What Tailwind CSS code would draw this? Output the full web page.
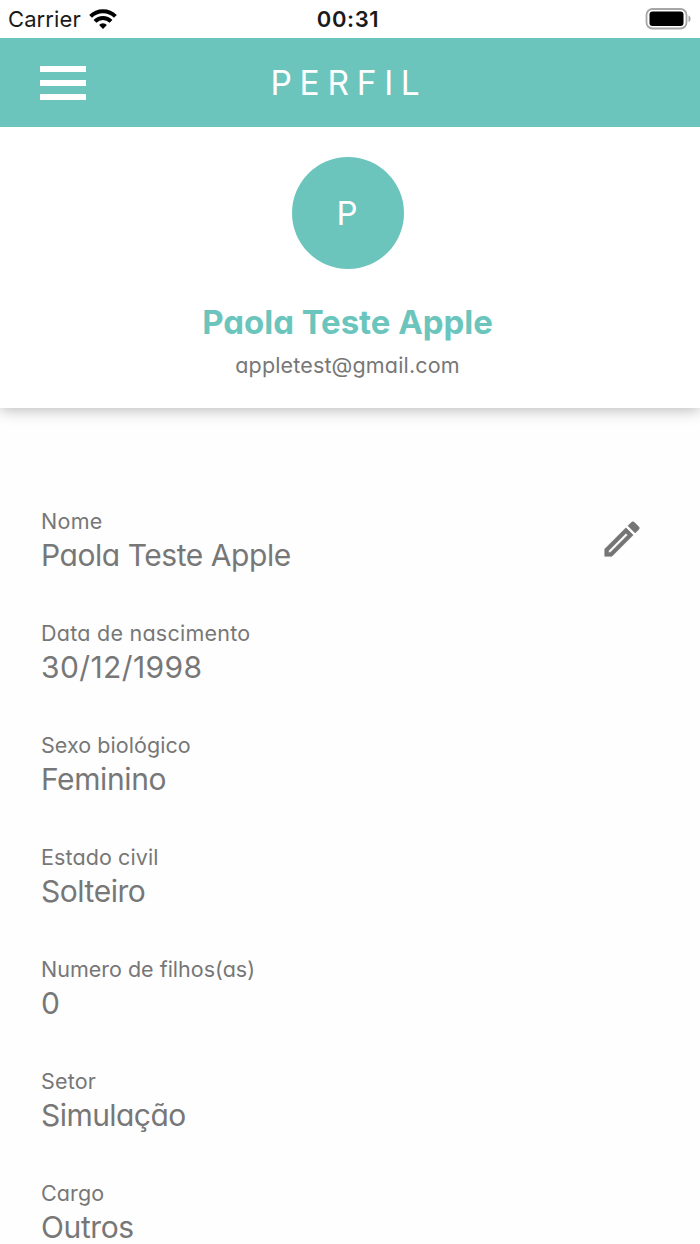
<!DOCTYPE html>
<html lang="pt-BR">

<head>
  <meta charset="UTF-8" />
  <meta name="viewport" content="width=device-width, initial-scale=1.0" />
  <title>Perfil</title>
  <script src="https://cdn.jsdelivr.net/npm/@tailwindcss/browser@4"></script>
</head>

<body class="h-[1244px] overflow-hidden bg-[#fefefe] text-[#777777] font-['Inter','Lato',sans-serif] [font-feature-settings:'cv11']">

  <!-- Status bar -->
  <div class="grid grid-cols-3 items-center h-[38px] pl-2 pr-[9px] bg-white text-[#1a1a1a]">
    <div class="flex items-center gap-2">
      <span class="text-[22px] leading-[38px] tracking-[0.1px] [font-feature-settings:normal]">Carrier</span>
      <svg class="w-7 h-5" viewBox="0 0 28 20" fill="none" stroke="#000" stroke-width="4">
        <path d="M1.600 7.400a17.600 17.600 0 0 1 24.800 0" />
        <path d="M6 12.400a11.400 11.400 0 0 1 16 0" />
        <path d="M14 20l-3.900-4.100a5.600 5.600 0 0 1 7.800 0z" fill="#000" stroke="none" />
      </svg>
    </div>
    <span class="pr-[3px] text-center text-[22px] leading-[38px] font-semibold tracking-[0.6px] [font-feature-settings:normal]">00:31</span>
    <svg class="justify-self-end w-[46px] h-[22px]" viewBox="0 0 46 22">
      <rect x="1.500" y="1" width="40" height="19.500" rx="6" fill="#fff" stroke="#a6a6a6" stroke-width="1.800" />
      <rect x="4.500" y="3.500" width="34" height="14.500" rx="3" fill="#000" />
      <path d="M43.500 7.500c2.800 1 2.800 5.500 0 6.500z" fill="#a6a6a6" />
    </svg>
  </div>

  <!-- Header -->
  <header class="relative z-10 grid grid-cols-[1fr_auto_1fr] items-center h-[89px] pl-10 pr-[42px] bg-[#6bc5bc] text-white">
    <button class="flex flex-col gap-2 w-[46px]" aria-label="Menu">
      <span class="h-1.5 bg-white"></span>
      <span class="h-1.5 bg-white"></span>
      <span class="h-1.5 bg-white"></span>
    </button>
    <h1 class="pt-px text-[33.5px] tracking-[7.7px]">PERFIL</h1>
  </header>

  <!-- User card -->
  <section class="flex flex-col items-center h-[281px] pt-[30px] pr-[5px] bg-white shadow-[0_2px_14px_rgba(0,0,0,0.28)]">
    <div class="flex items-center justify-center ml-px size-[112px] pt-0.5 pr-0.5 rounded-full bg-[#6bc5bc] text-white text-[33px]">P</div>
    <h2 class="mt-8 text-[33px] leading-[42px] font-bold tracking-[-0.05px] text-[#6bc5bc]">Paola Teste Apple</h2>
    <p class="mt-[7px] text-[21.5px] leading-[30px] tracking-[0.15px]">appletest@gmail.com</p>
  </section>

  <!-- Profile data -->
  <main class="flex justify-between items-start pt-[98px] pl-[41px] pr-[55px]">
    <dl class="space-y-11">
      <div>
        <dt class="text-[21.5px] leading-[30px] tracking-[0.3px]">Nome</dt>
        <dd class="text-[30px] leading-[38px] tracking-[-0.45px]">Paola Teste Apple</dd>
      </div>
      <div>
        <dt class="text-[21.5px] leading-[30px] tracking-[0.25px]">Data de nascimento</dt>
        <dd class="text-[30px] leading-[38px] tracking-[0.4px]">30/12/1998</dd>
      </div>
      <div>
        <dt class="text-[21.5px] leading-[30px] tracking-[0.05px]">Sexo biológico</dt>
        <dd class="text-[30px] leading-[38px] tracking-[-0.4px]">Feminino</dd>
      </div>
      <div>
        <dt class="text-[21.5px] leading-[30px] tracking-[0.1px]">Estado civil</dt>
        <dd class="text-[30px] leading-[38px] tracking-[-0.45px]">Solteiro</dd>
      </div>
      <div>
        <dt class="text-[21.5px] leading-[30px]">Numero de filhos(as)</dt>
        <dd class="text-[30px] leading-[38px]">0</dd>
      </div>
      <div>
        <dt class="text-[21.5px] leading-[30px] tracking-[0.2px]">Setor</dt>
        <dd class="text-[30px] leading-[38px] tracking-[-0.55px]">Simulação</dd>
      </div>
      <div>
        <dt class="text-[21.5px] leading-[30px] tracking-[0.1px]">Cargo</dt>
        <dd class="text-[30px] leading-[38px] tracking-[-0.4px]">Outros</dd>
      </div>
    </dl>
    <button class="mt-[10px]" aria-label="Editar">
      <svg class="size-[46px]" viewBox="0 0 24 24" fill="#757575" stroke="#757575" stroke-width="0.300">
        <path d="M14.060 9L15 9.940L5.920 19H5V18.080L14.060 9M17.660 3C17.410 3 17.150 3.100 16.960 3.290L15.130 5.120L18.880 8.870L20.710 7.040C21.100 6.650 21.100 6 20.710 5.630L18.370 3.290C18.170 3.090 17.920 3 17.660 3M14.060 6.190L3 17.250V21H6.750L17.810 9.940L14.060 6.190Z" />
      </svg>
    </button>
  </main>

</body>

</html>
